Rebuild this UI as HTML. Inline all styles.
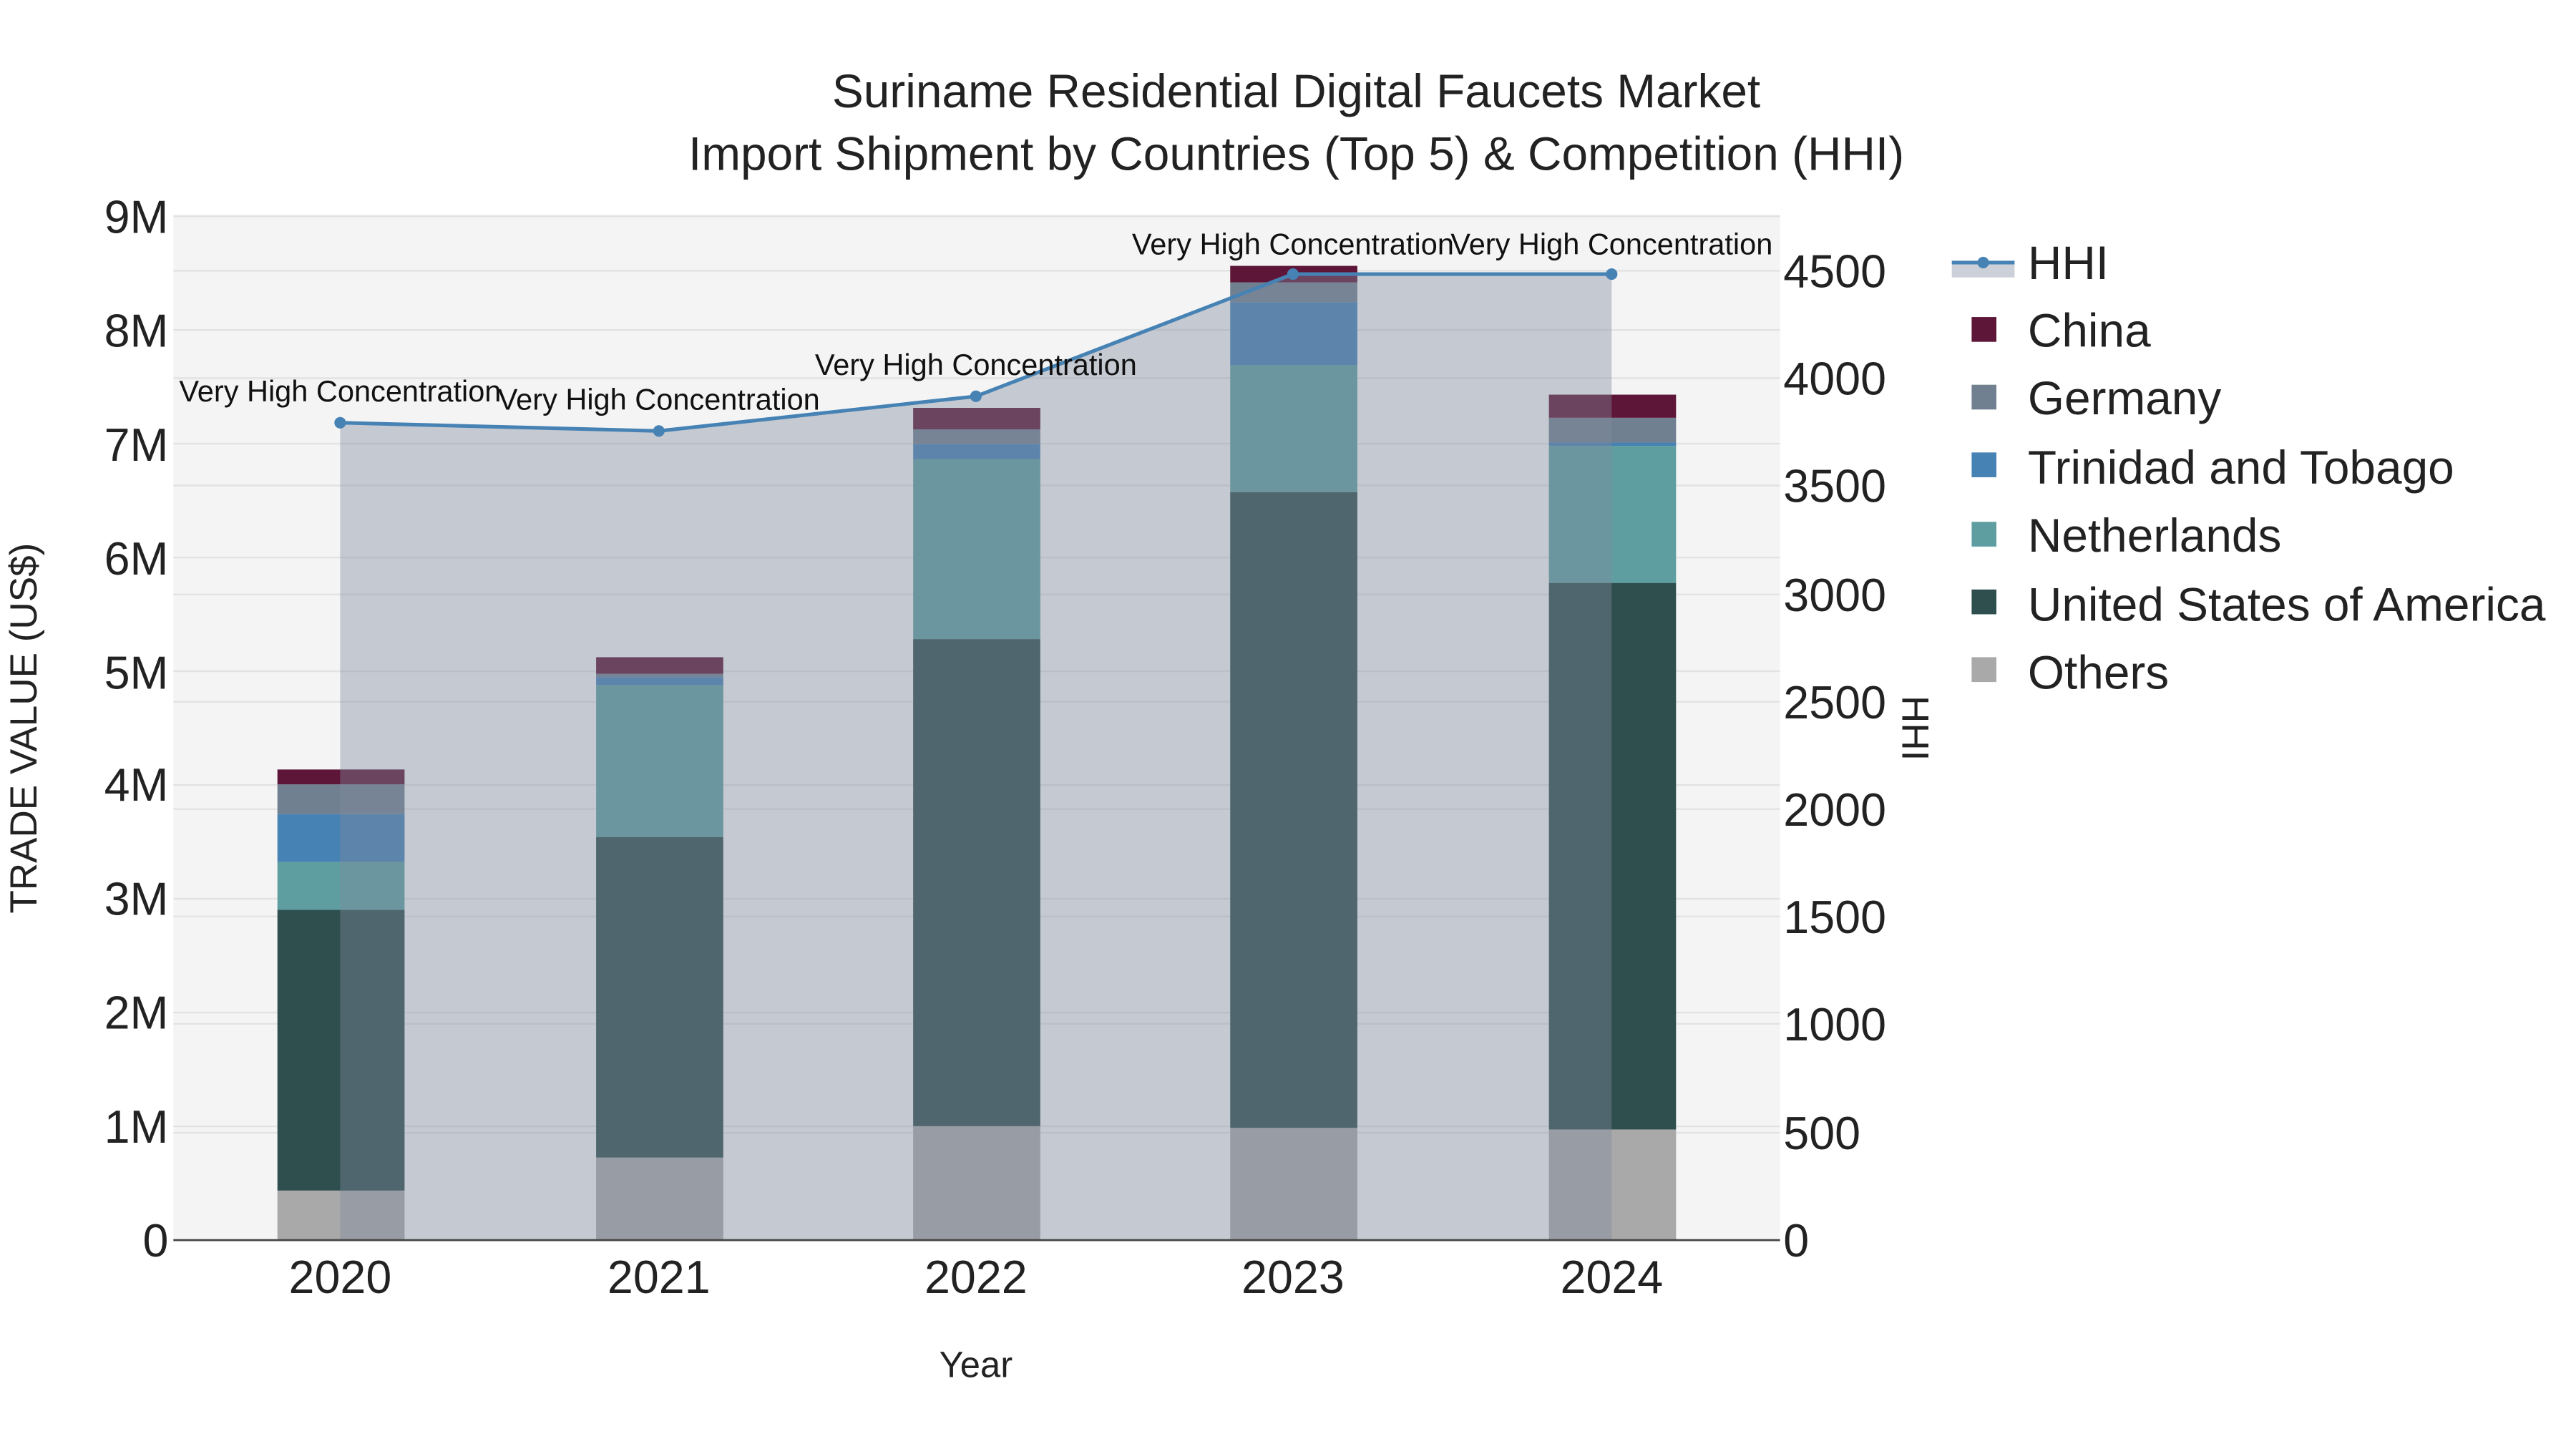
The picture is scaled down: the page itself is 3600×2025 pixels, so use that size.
<!DOCTYPE html>
<html><head><meta charset="utf-8"><style>html,body{margin:0;padding:0;background:#fff}svg{display:block}</style></head>
<body>
<svg xmlns="http://www.w3.org/2000/svg" width="3600" height="2025" viewBox="0 0 1560 877.5" font-family="Liberation Sans, sans-serif">
<rect width="1560" height="877.5" fill="#fff"/>
<rect x="105" y="130" width="973" height="621" fill="#f4f4f4"/>
<g stroke="#e2e2e2" stroke-width="1">
<line x1="105" x2="1078" y1="682.1" y2="682.1"/><line x1="105" x2="1078" y1="613.2" y2="613.2"/>
<line x1="105" x2="1078" y1="544.3" y2="544.3"/><line x1="105" x2="1078" y1="475.4" y2="475.4"/>
<line x1="105" x2="1078" y1="406.5" y2="406.5"/><line x1="105" x2="1078" y1="337.6" y2="337.6"/>
<line x1="105" x2="1078" y1="268.7" y2="268.7"/><line x1="105" x2="1078" y1="199.8" y2="199.8"/>
<line x1="105" x2="1078" y1="131" y2="131"/>
<line x1="105" x2="1078" y1="164" y2="164"/><line x1="105" x2="1078" y1="229" y2="229"/>
<line x1="105" x2="1078" y1="294" y2="294"/><line x1="105" x2="1078" y1="360" y2="360"/>
<line x1="105" x2="1078" y1="425" y2="425"/><line x1="105" x2="1078" y1="490" y2="490"/>
<line x1="105" x2="1078" y1="555" y2="555"/><line x1="105" x2="1078" y1="620" y2="620"/>
<line x1="105" x2="1078" y1="686" y2="686"/>
</g>
<g>
<rect x="168" y="721" width="77" height="30" fill="#a9a9a9"/>
<rect x="168" y="551" width="77" height="170" fill="#2f4f4f"/>
<rect x="168" y="522" width="77" height="29" fill="#5f9ea0"/>
<rect x="168" y="493" width="77" height="29" fill="#4682b4"/>
<rect x="168" y="475" width="77" height="18" fill="#708090"/>
<rect x="168" y="466" width="77" height="9" fill="#5e1638"/>
<rect x="361" y="701" width="77" height="50" fill="#a9a9a9"/>
<rect x="361" y="507" width="77" height="194" fill="#2f4f4f"/>
<rect x="361" y="415" width="77" height="92" fill="#5f9ea0"/>
<rect x="361" y="410" width="77" height="5" fill="#4682b4"/>
<rect x="361" y="408" width="77" height="2" fill="#708090"/>
<rect x="361" y="398" width="77" height="10" fill="#5e1638"/>
<rect x="553" y="682" width="77" height="69" fill="#a9a9a9"/>
<rect x="553" y="387" width="77" height="295" fill="#2f4f4f"/>
<rect x="553" y="278" width="77" height="109" fill="#5f9ea0"/>
<rect x="553" y="269" width="77" height="9" fill="#4682b4"/>
<rect x="553" y="260" width="77" height="9" fill="#708090"/>
<rect x="553" y="247" width="77" height="13" fill="#5e1638"/>
<rect x="745" y="683" width="77" height="68" fill="#a9a9a9"/>
<rect x="745" y="298" width="77" height="385" fill="#2f4f4f"/>
<rect x="745" y="221" width="77" height="77" fill="#5f9ea0"/>
<rect x="745" y="183" width="77" height="38" fill="#4682b4"/>
<rect x="745" y="171" width="77" height="12" fill="#708090"/>
<rect x="745" y="161" width="77" height="10" fill="#5e1638"/>
<rect x="938" y="684" width="77" height="67" fill="#a9a9a9"/>
<rect x="938" y="353" width="77" height="331" fill="#2f4f4f"/>
<rect x="938" y="270" width="77" height="83" fill="#5f9ea0"/>
<rect x="938" y="268" width="77" height="2" fill="#4682b4"/>
<rect x="938" y="253" width="77" height="15" fill="#708090"/>
<rect x="938" y="239" width="77" height="14" fill="#5e1638"/>
</g>
<polygon points="206,751 206,256 399,261 591,240 783,166 976,166 976,751" fill="rgb(128,138,158)" fill-opacity="0.4"/>
<polyline points="206,256 399,261 591,240 783,166 976,166" fill="none" stroke="#4682b4" stroke-width="2.2"/>
<g fill="#4682b4"><circle cx="206" cy="256" r="3.5"/><circle cx="399" cy="261" r="3.5"/><circle cx="591" cy="240" r="3.5"/><circle cx="783" cy="166" r="3.5"/><circle cx="976" cy="166" r="3.5"/></g>
<g font-size="18" fill="#111" text-anchor="middle">
<text x="206" y="243">Very High Concentration</text>
<text x="399" y="248">Very High Concentration</text>
<text x="591" y="227">Very High Concentration</text>
<text x="783" y="154">Very High Concentration</text>
<text x="976" y="154">Very High Concentration</text>
</g>
<line x1="105" x2="1078" y1="751" y2="751" stroke="#444" stroke-width="1.2"/>
<g font-size="28" fill="#222" text-anchor="end">
<text x="102" y="761">0</text><text x="102" y="692">1M</text><text x="102" y="623">2M</text>
<text x="102" y="554">3M</text><text x="102" y="485">4M</text><text x="102" y="417">5M</text>
<text x="102" y="348">6M</text><text x="102" y="279">7M</text><text x="102" y="210">8M</text>
<text x="102" y="141">9M</text>
</g>
<g font-size="28" fill="#222" text-anchor="start">
<text x="1080" y="761">0</text><text x="1080" y="696">500</text><text x="1080" y="630">1000</text>
<text x="1080" y="565">1500</text><text x="1080" y="500">2000</text><text x="1080" y="435">2500</text>
<text x="1080" y="370">3000</text><text x="1080" y="304">3500</text><text x="1080" y="239">4000</text>
<text x="1080" y="174">4500</text>
</g>
<g font-size="28" fill="#222" text-anchor="middle">
<text x="206" y="783">2020</text><text x="399" y="783">2021</text><text x="591" y="783">2022</text>
<text x="783" y="783">2023</text><text x="976" y="783">2024</text>
</g>
<text x="591" y="834" font-size="22" fill="#222" text-anchor="middle">Year</text>
<text transform="translate(22,441) rotate(-90)" font-size="23" fill="#222" text-anchor="middle">TRADE VALUE (US$)</text>
<text transform="translate(1152,441) rotate(90)" font-size="23" fill="#222" text-anchor="middle">HHI</text>
<g font-size="28.5" fill="#222" text-anchor="middle">
<text x="785" y="65">Suriname Residential Digital Faucets Market</text>
<text x="785" y="103">Import Shipment by Countries (Top 5) &amp; Competition (HHI)</text>
</g>
<rect x="1182" y="158" width="38" height="10" fill="rgb(128,138,158)" fill-opacity="0.4"/>
<line x1="1182" x2="1220" y1="159" y2="159" stroke="#4682b4" stroke-width="2.2"/>
<circle cx="1201" cy="159" r="3.5" fill="#4682b4"/>
<rect x="1194" y="192" width="15" height="15" fill="#5e1638"/>
<rect x="1194" y="233" width="15" height="15" fill="#708090"/>
<rect x="1194" y="274" width="15" height="15" fill="#4682b4"/>
<rect x="1194" y="316" width="15" height="15" fill="#5f9ea0"/>
<rect x="1194" y="357" width="15" height="15" fill="#2f4f4f"/>
<rect x="1194" y="398" width="15" height="15" fill="#a9a9a9"/>
<g font-size="28.5" fill="#222">
<text x="1228" y="169">HHI</text><text x="1228" y="210">China</text><text x="1228" y="251">Germany</text>
<text x="1228" y="293">Trinidad and Tobago</text><text x="1228" y="334">Netherlands</text>
<text x="1228" y="376">United States of America</text><text x="1228" y="417">Others</text>
</g>
</svg>
</body></html>
